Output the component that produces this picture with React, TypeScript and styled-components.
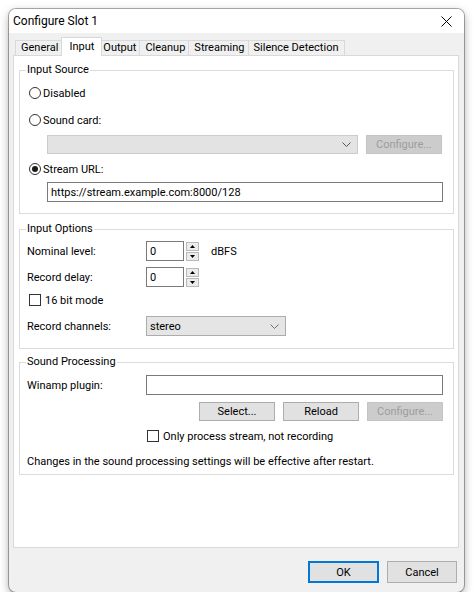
import React from "react";
import styled, { createGlobalStyle } from "styled-components";

const GlobalStyle = createGlobalStyle`
  html, body {
    margin: 0;
    padding: 0;
    background: #ffffff;
  }
  body {
    font-family: Roboto, "Noto Sans", "Segoe UI", sans-serif;
    font-size: 11px;
    color: #000;
  }
`;

function Chevron({ color = "#606060" }: { color?: string }) {
  return (
    <svg width="9" height="5" viewBox="0 0 9 5">
      <path d="M0.5 0.5 L4.5 4.5 L8.5 0.5" fill="none" stroke={color} strokeWidth="1" />
    </svg>
  );
}

function CloseIcon() {
  return (
    <svg width="11" height="11" viewBox="0 0 11 11">
      <path d="M0.5 0.5 L10.5 10.5 M10.5 0.5 L0.5 10.5" stroke="#000" strokeWidth="1" />
    </svg>
  );
}

type SpinProps = { value: string };

function SpinBox({ value }: SpinProps) {
  return (
    <SpinWrap>
      <TextBox $width={38}>{value}</TextBox>
      <SpinButtons>
        <SpinButton>
          <svg width="5" height="3" viewBox="0 0 5 3">
            <path d="M0 3 L2.5 0 L5 3 Z" fill="#000" />
          </svg>
        </SpinButton>
        <SpinButton>
          <svg width="5" height="3" viewBox="0 0 5 3">
            <path d="M0 0 L2.5 3 L5 0 Z" fill="#000" />
          </svg>
        </SpinButton>
      </SpinButtons>
    </SpinWrap>
  );
}

const tabs = ["General", "Input", "Output", "Cleanup", "Streaming", "Silence Detection"];

export default function App() {
  return (
    <Page>
      <GlobalStyle />
      <Window>
        <TitleBar>
          <Title>Configure Slot 1</Title>
          <CloseButton>
            <CloseIcon />
          </CloseButton>
        </TitleBar>
        <Body>
          <TabStrip>
            {tabs.map(t => (
              <Tab key={t} $active={t === "Input"}>
                {t}
              </Tab>
            ))}
          </TabStrip>
          <Panel>
            <Group $mt={6} $pb={11}>
              <Legend>Input Source</Legend>
              <Row $mt={5} $indent={3}>
                <Radio />
                <OptionText>Disabled</OptionText>
              </Row>
              <Row $mt={7} $indent={3}>
                <Radio />
                <OptionText>Sound card:</OptionText>
              </Row>
              <Row $mt={4} $indent={21}>
                <Combo $width={311} $disabled>
                  <span />
                  <Chevron color="#555" />
                </Combo>
                <Button $width={76} $disabled $ml={8}>
                  Configure...
                </Button>
              </Row>
              <Row $mt={5} $indent={3}>
                <Radio $checked />
                <OptionText>Stream URL:</OptionText>
              </Row>
              <Row $mt={3} $indent={21}>
                <TextBox $grow>https://stream.example.com:8000/128</TextBox>
              </Row>
            </Group>

            <Group $mt={7} $pb={12}>
              <Legend>Input Options</Legend>
              <Row $mt={4} $indent={1}>
                <FieldLabel>Nominal level:</FieldLabel>
                <SpinBox value="0" />
                <Unit>dBFS</Unit>
              </Row>
              <Row $mt={6} $indent={1}>
                <FieldLabel>Record delay:</FieldLabel>
                <SpinBox value="0" />
              </Row>
              <Row $mt={3} $indent={3}>
                <CheckBox />
                <OptionText $gap={4}>16 bit mode</OptionText>
              </Row>
              <Row $mt={6} $indent={1}>
                <FieldLabel>Record channels:</FieldLabel>
                <Combo $width={140}>
                  <span>stereo</span>
                  <Chevron color="#707070" />
                </Combo>
              </Row>
            </Group>

            <Group $mt={5} $pb={5}>
              <Legend>Sound Processing</Legend>
              <Row $mt={5} $indent={1}>
                <FieldLabel>Winamp plugin:</FieldLabel>
                <TextBox $grow />
              </Row>
              <Row $mt={7} $h={19} $end>
                <Button $width={76}>Select...</Button>
                <Button $width={76} $ml={8}>
                  Reload
                </Button>
                <Button $width={76} $ml={8} $disabled>
                  Configure...
                </Button>
              </Row>
              <Row $mt={5} $indent={121}>
                <CheckBox />
                <OptionText $gap={4}>Only process stream, not recording</OptionText>
              </Row>
              <Row $mt={7} $h={16} $indent={1}>
                Changes in the sound processing settings will be effective after restart.
              </Row>
            </Group>
          </Panel>
        </Body>
        <Footer>
          <Button $width={71} $h={22} $default>
            OK
          </Button>
          <Button $width={70} $h={22} $ml={8}>
            Cancel
          </Button>
        </Footer>
      </Window>
    </Page>
  );
}

const Page = styled.div`
  padding: 9px 0 0 9px;
`;

const Window = styled.div`
  width: 455px;
  height: 583px;
  background: #f0f0f0;
  border-radius: 7px;
  box-shadow: 0 0 0 1px rgba(0, 0, 0, 0.3), 0 3px 10px rgba(0, 0, 0, 0.35);
  display: flex;
  flex-direction: column;
  overflow: hidden;
`;

const TitleBar = styled.div`
  height: 24px;
  background: #ffffff;
  display: flex;
  align-items: center;
  padding-left: 4px;
`;

const Title = styled.div`
  font-size: 12px;
  line-height: 16px;
`;

const CloseButton = styled.div`
  margin-left: auto;
  width: 36px;
  height: 24px;
  display: flex;
  align-items: center;
  justify-content: center;
`;

const Body = styled.div`
  flex: 1;
  display: flex;
  flex-direction: column;
  padding: 4px 5px 0 4px;
`;

const TabStrip = styled.div`
  display: flex;
  align-items: flex-end;
  height: 19px;
  padding-left: 2px;
  margin-bottom: -1px;
  position: relative;
  z-index: 1;
`;

const Tab = styled.div<{ $active?: boolean }>`
  box-sizing: border-box;
  display: flex;
  align-items: center;
  padding: 0 ${p => (p.$active ? 7 : 5)}px;
  height: ${p => (p.$active ? 19 : 15)}px;
  margin: 0 ${p => (p.$active ? -2 : 0)}px ${p => (p.$active ? 0 : 1)}px;
  border: 1px solid #d9d9d9;
  border-bottom: none;
  background: ${p => (p.$active ? "#ffffff" : "#f0f0f0")};
  position: relative;
  z-index: ${p => (p.$active ? 2 : 1)};
  line-height: 14px;
  white-space: nowrap;
  & + & {
    margin-left: ${p => (p.$active ? -3 : -1)}px;
  }
`;

const Panel = styled.div`
  flex: 1;
  background: #ffffff;
  border: 1px solid #d9d9d9;
  padding: 0 4px 0 5px;
`;

const Group = styled.fieldset<{ $mt: number; $pb: number }>`
  margin: ${p => p.$mt}px 0 0;
  border: 1px solid #dcdcdc;
  padding: 0 10px ${p => p.$pb}px 6px;
  min-width: 0;
`;

const Legend = styled.legend`
  padding: 0 1px;
  line-height: 16px;
  font-size: 11px;
`;

const Row = styled.div<{ $mt: number; $h?: number; $indent?: number; $end?: boolean }>`
  display: flex;
  align-items: center;
  justify-content: ${p => (p.$end ? "flex-end" : "flex-start")};
  height: ${p => p.$h ?? 20}px;
  margin-top: ${p => p.$mt}px;
  margin-left: ${p => p.$indent ?? 0}px;
  white-space: nowrap;
`;

const Radio = styled.span<{ $checked?: boolean }>`
  box-sizing: border-box;
  width: 12px;
  height: 12px;
  border-radius: 50%;
  border: 1px solid #333333;
  background: #ffffff;
  display: inline-flex;
  align-items: center;
  justify-content: center;
  flex: none;
  &::after {
    content: "";
    width: 6px;
    height: 6px;
    border-radius: 50%;
    background: ${p => (p.$checked ? "#1a1a1a" : "transparent")};
  }
`;

const CheckBox = styled.span`
  box-sizing: border-box;
  width: 12px;
  height: 12px;
  border: 1px solid #333333;
  background: #ffffff;
  flex: none;
`;

const OptionText = styled.span<{ $gap?: number }>`
  margin-left: ${p => p.$gap ?? 2}px;
`;

const FieldLabel = styled.span`
  width: 119px;
  flex: none;
`;

const TextBox = styled.div<{ $width?: number; $grow?: boolean }>`
  box-sizing: border-box;
  height: 20px;
  ${p => (p.$grow ? "flex: 1;" : `width: ${p.$width}px;`)}
  border: 1px solid #7a7a7a;
  background: #ffffff;
  padding: 0 3px;
  display: flex;
  align-items: center;
`;

const Combo = styled.div<{ $width: number; $disabled?: boolean }>`
  box-sizing: border-box;
  width: ${p => p.$width}px;
  height: ${p => (p.$disabled ? 19 : 20)}px;
  border: 1px solid ${p => (p.$disabled ? "#cccccc" : "#acacac")};
  background: ${p => (p.$disabled ? "#e3e3e3" : "#e5e5e5")};
  display: flex;
  align-items: center;
  justify-content: space-between;
  padding: 0 6px 0 3px;
`;

const Button = styled.div<{
  $width: number;
  $h?: number;
  $ml?: number;
  $disabled?: boolean;
  $default?: boolean;
}>`
  box-sizing: border-box;
  width: ${p => p.$width}px;
  height: ${p => p.$h ?? 19}px;
  margin-left: ${p => p.$ml ?? 0}px;
  display: flex;
  align-items: center;
  justify-content: center;
  background: ${p => (p.$disabled ? "#cccccc" : "#e1e1e1")};
  border: 1px solid ${p => (p.$disabled ? "#c4c4c4" : p.$default ? "#0078d7" : "#adadad")};
  box-shadow: ${p => (p.$default ? "inset 0 0 0 1px #0078d7" : "none")};
  color: ${p => (p.$disabled ? "#9d9d9d" : "#000")};
  flex: none;
`;

const SpinWrap = styled.div`
  display: flex;
  align-items: center;
`;

const SpinButtons = styled.div`
  display: flex;
  flex-direction: column;
  gap: 1px;
  margin-left: 2px;
`;

const SpinButton = styled.div`
  box-sizing: border-box;
  width: 13px;
  height: 9px;
  border: 1px solid #b8b8b8;
  background: #ececec;
  display: flex;
  align-items: center;
  justify-content: center;
`;

const Unit = styled.span`
  margin-left: 12px;
`;

const Footer = styled.div`
  height: 44px;
  display: flex;
  justify-content: flex-end;
  align-items: flex-start;
  padding: 13px 7px 0 0;
  box-sizing: border-box;
`;
